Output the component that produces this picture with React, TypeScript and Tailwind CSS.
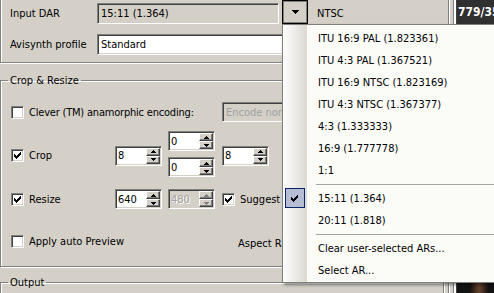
import React from "react";

const SUNKEN =
  "border border-t-[#808080] border-l-[#808080] border-b-white border-r-white shadow-[inset_1px_1px_0_#404040,inset_-1px_-1px_0_#d4d0c8]";
const RAISED =
  "bg-[#d4d0c8] border border-t-white border-l-white border-b-[#404040] border-r-[#404040] shadow-[inset_-1px_-1px_0_#808080,inset_1px_1px_0_#d4d0c8]";

function Check({ color = "#000" }: { color?: string }) {
  return (
    <svg width="7" height="7" viewBox="0 0 7 7" shapeRendering="crispEdges">
      <g fill={color}>
        <rect x="6" y="0" width="1" height="1" />
        <rect x="5" y="1" width="2" height="1" />
        <rect x="0" y="2" width="1" height="1" />
        <rect x="4" y="2" width="3" height="1" />
        <rect x="0" y="3" width="2" height="1" />
        <rect x="3" y="3" width="3" height="1" />
        <rect x="0" y="4" width="5" height="1" />
        <rect x="1" y="5" width="3" height="1" />
        <rect x="2" y="6" width="1" height="1" />
      </g>
    </svg>
  );
}

function Checkbox({ checked }: { checked?: boolean }) {
  return (
    <div className={`w-[13px] h-[13px] shrink-0 bg-white flex items-center justify-center ${SUNKEN}`}>
      {checked ? <Check /> : null}
    </div>
  );
}

function Arrow({ up, color = "#000" }: { up?: boolean; color?: string }) {
  return (
    <svg width="5" height="3" viewBox="0 0 5 3" shapeRendering="crispEdges">
      <path d={up ? "M2 0h1v1h1v1h1v1H0V2h1V1h1z" : "M0 0h5v1H4v1H3v1H2V2H1V1H0z"} fill={color} />
    </svg>
  );
}

function Spinner({ value, disabled }: { value: string; disabled?: boolean }) {
  return (
    <div className={`w-[47px] h-[20px] shrink-0 flex ${SUNKEN} ${disabled ? "bg-[#d4d0c8]" : "bg-white"}`}>
      <div
        className={`flex-1 flex items-center pl-[2px] ${
          disabled ? "text-[#a0a0a0] [text-shadow:1px_1px_0_#fff]" : ""
        }`}
      >
        {value}
      </div>
      <div className="w-[15px] flex flex-col py-[1px] pr-[1px]">
        <div className={`flex-1 flex items-center justify-center ${RAISED}`}>
          <Arrow up color={disabled ? "#808080" : "#000"} />
        </div>
        <div className={`flex-1 flex items-center justify-center ${RAISED}`}>
          <Arrow color={disabled ? "#808080" : "#000"} />
        </div>
      </div>
    </div>
  );
}

function MenuItem({ label, checked }: { label: string; checked?: boolean }) {
  return (
    <div className="h-[22px] flex items-center">
      <div className="w-[25px] self-stretch flex items-center justify-center">
        {checked ? (
          <div className="w-[20px] h-[20px] ml-[-2px] bg-[#b6bdd2] border border-[#0a246a] flex items-center justify-center">
            <Check />
          </div>
        ) : null}
      </div>
      <div className="pl-[10px] whitespace-nowrap">{label}</div>
    </div>
  );
}

function Sep() {
  return (
    <div className="h-[6px] flex items-center pl-[33px]">
      <div className="h-px flex-1 bg-[#a6a39e]" />
    </div>
  );
}

export default function App() {
  return (
    <div className="relative w-[494px] h-[293px] overflow-hidden bg-[#d4d0c8] text-black text-[11px] leading-[13px] font-['DejaVu_Sans_Condensed','DejaVu_Sans',sans-serif] flex">
      <div className="w-[448px] shrink-0 flex flex-col">
        {/* top group */}
        <div className="h-[63px] shrink-0 border-l border-b border-[#808080] shadow-[inset_1px_0_0_#fff,0_1px_0_#fff] pl-[9px]">
          <div className="h-[24px] flex items-end">
            <div className="w-[87px] self-stretch flex items-center pt-[2px]">Input DAR</div>
            <div className={`w-[182px] h-[21px] flex items-center pl-[3px] ${SUNKEN}`}>15:11 (1.364)</div>
            <div className="w-[3px]" />
            <div className="w-[26px] h-[24px] border border-black shadow-[inset_1px_1px_0_#808080,inset_-1px_-1px_0_#808080] flex items-center justify-center">
              <svg width="7" height="4" viewBox="0 0 7 4" shapeRendering="crispEdges">
                <path d="M0 0h7v1H6v1H5v1H4v1H3V3H2V2H1V1H0z" fill="#000" />
              </svg>
            </div>
            <div className="self-stretch flex items-center pl-[9px] pt-[2px]">NTSC</div>
          </div>
          <div className="mt-[10px] h-[21px] flex">
            <div className="w-[87px] flex items-center">Avisynth profile</div>
            <div className={`w-[340px] h-[21px] bg-white flex items-center pl-[3px] ${SUNKEN}`}>Standard</div>
          </div>
        </div>

        {/* crop & resize */}
        <fieldset className="mt-[10px] mr-[4px] shrink-0 border border-[#808080] shadow-[inset_1px_1px_0_#fff,1px_1px_0_#fff] pl-[10px] pb-[15px]">
          <legend className="ml-[-3px] px-[2px] leading-[13px] pt-[1px]">Crop &amp; Resize</legend>
          <div className="mt-[15px] h-[20px] flex items-center">
            <div className="w-[211px] flex items-center gap-[5px]">
              <Checkbox />
              <span className="whitespace-nowrap tracking-[-0.2px]">Clever (TM) anamorphic encoding:</span>
            </div>
            <div className={`w-[120px] h-[20px] flex items-center pl-[3px] text-[#a0a0a0] ${SUNKEN}`}>Encode non-mod16</div>
          </div>

          <div className="mt-[9px] h-[46px] flex items-center">
            <div className="w-[104px] flex items-center gap-[5px] pt-[3px]">
              <Checkbox checked />
              <span>Crop</span>
            </div>
            <div className="pt-[3px]">
              <Spinner value="8" />
            </div>
            <div className="w-[6px]" />
            <div className="flex flex-col gap-[6px]">
              <Spinner value="0" />
              <Spinner value="0" />
            </div>
            <div className="w-[7px]" />
            <div className="pt-[3px]">
              <Spinner value="8" />
            </div>
          </div>

          <div className="mt-[12px] h-[20px] flex items-center">
            <div className="w-[104px] flex items-center gap-[5px]">
              <Checkbox checked />
              <span>Resize</span>
            </div>
            <Spinner value="640" />
            <div className="w-[6px]" />
            <Spinner value="480" disabled />
            <div className="w-[7px]" />
            <div className="flex items-center gap-[5px]">
              <Checkbox checked />
              <span>Suggest Resolution</span>
            </div>
          </div>

          <div className="mt-[22px] h-[20px] flex items-center">
            <div className="w-[227px] flex items-center gap-[5px]">
              <Checkbox />
              <span className="whitespace-nowrap">Apply auto Preview</span>
            </div>
            <span className="pt-[4px] whitespace-nowrap">Aspect Ratio</span>
          </div>
        </fieldset>

        {/* output */}
        <fieldset className="mt-[9px] mr-[4px] h-[40px] shrink-0 border border-[#808080] shadow-[inset_1px_1px_0_#fff,1px_1px_0_#fff]">
          <legend className="ml-[7px] px-[2px] leading-[13px]">Output</legend>
        </fieldset>
      </div>

      {/* splitter */}
      <div className="w-px shrink-0 bg-[#808080]" />
      <div className="w-px shrink-0 bg-white" />
      <div className="w-[3px] shrink-0" />
      <div className="w-px shrink-0 bg-[#808080]" />
      <div className="w-[2px] shrink-0 bg-white" />
      <div className="w-px shrink-0 bg-[#404040]" />

      {/* right preview */}
      <div className="flex-1 min-w-0 flex flex-col bg-[#121212]">
        <div className="h-[24px] bg-[#303030] text-white font-bold text-[12px] flex items-center pl-[1px] whitespace-nowrap overflow-hidden">
          779/354
        </div>
        <div className="flex-1 bg-[radial-gradient(ellipse_at_60%_105%,#6b4a35_0%,#3a2418_18%,#121212_30%)]" />
      </div>

      {/* dropdown menu */}
      <div className="absolute left-[282px] top-[24px] w-[240px] bg-[#fbfbf8] border border-[#808080] shadow-[2px_2px_3px_rgba(0,0,0,0.45)] z-10 pt-[2px] pb-[1px]">
        <div className="absolute left-0 top-0 bottom-0 w-[24px] bg-[linear-gradient(90deg,#fdfdfc,#dcd9d2)]" />
        <div className="relative">
          <MenuItem label="ITU 16:9 PAL (1.823361)" />
          <MenuItem label="ITU 4:3 PAL (1.367521)" />
          <MenuItem label="ITU 16:9 NTSC (1.823169)" />
          <MenuItem label="ITU 4:3 NTSC (1.367377)" />
          <MenuItem label="4:3 (1.333333)" />
          <MenuItem label="16:9 (1.777778)" />
          <MenuItem label="1:1" />
          <Sep />
          <MenuItem label="15:11 (1.364)" checked />
          <MenuItem label="20:11 (1.818)" />
          <Sep />
          <MenuItem label="Clear user-selected ARs..." />
          <MenuItem label="Select AR..." />
        </div>
      </div>
    </div>
  );
}
